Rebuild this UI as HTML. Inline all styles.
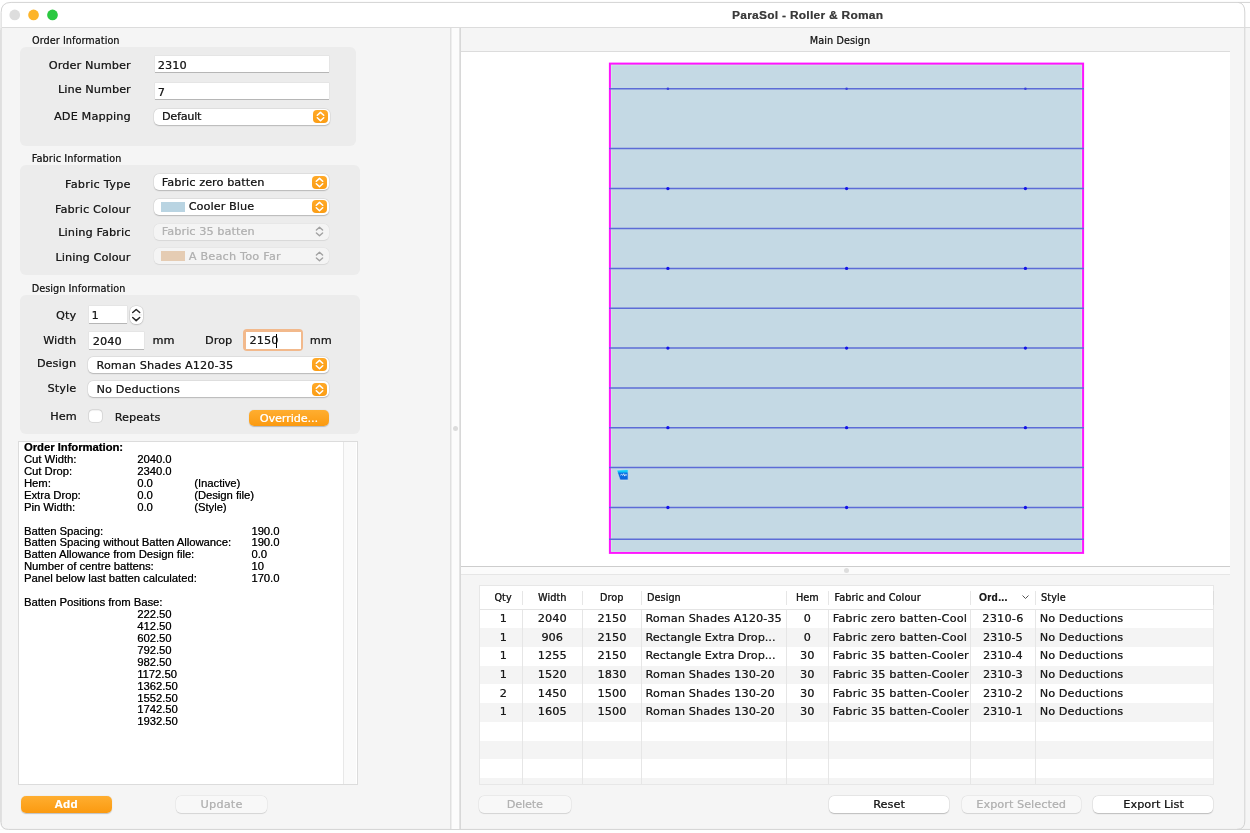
<!DOCTYPE html><html><head><meta charset="utf-8"><title>ParaSol - Roller &amp; Roman</title><style>
*{box-sizing:border-box;margin:0;padding:0}
html,body{width:1250px;height:833px;overflow:hidden;background:#fff}
body{font-family:"Liberation Sans",sans-serif;color:#1a1a1a;position:relative}
.a{position:absolute}
.t{position:absolute;white-space:nowrap;-webkit-text-stroke:0.1px currentColor;text-shadow:0.2px 0 0 color-mix(in srgb, currentColor 55%, transparent)}
.grp{position:absolute;background:#ececec;border-radius:6px}
.inp{position:absolute;background:#fff;box-shadow:0 0 0 0.5px rgba(0,0,0,.06),0 1px 0 0 rgba(0,0,0,.20)}
.pop{position:absolute;background:#fff;border-radius:5px;box-shadow:0 0 0 0.5px rgba(0,0,0,.06),0 0.5px 1.2px rgba(0,0,0,.20)}
.pop.dis{background:#f4f4f4;box-shadow:0 0 0 0.5px rgba(0,0,0,.035),0 0.5px 1px rgba(0,0,0,.07)}
.ob{position:absolute;width:15px;height:13px;border-radius:4px;background:linear-gradient(#ffa928,#fb9d14)}
.btn{position:absolute;border-radius:5px;background:#fff;box-shadow:0 0 0 0.5px rgba(0,0,0,.07),0 0.5px 1.2px rgba(0,0,0,.20)}
.btn.dis{background:#f8f8f8;box-shadow:0 0 0 0.5px rgba(0,0,0,.07),0 0.5px 1px rgba(0,0,0,.10)}
.btn.or{background:linear-gradient(#ffae30,#fb9a10);box-shadow:0 0.5px 1px rgba(0,0,0,.22)}
</style></head><body><div id="root" style="position:absolute;left:0;top:0;width:1250px;height:833px;will-change:transform">
<div class="a" style="left:0;top:28px;width:1250px;height:801.5px;background:#f5f5f5"></div>
<svg class="a" style="left:0;top:0" width="1250" height="833" viewBox="0 0 1250 833"><path d="M0 28 V822 Q0 829.4 8 829.4 H0 Z" fill="#fff"/><path d="M1.1 822.4 V12.4 Q1.1 2.4 11.1 2.4 H1250 M1238 2.4 Q1244.8 3 1244.8 12 V821 Q1244.8 829.4 1237 829.4 M1.1 822.4 Q1.1 829.4 8.5 829.4 H1250" fill="none" stroke="#d3d3d3" stroke-width="1"/><path d="M0.4 30 V822" stroke="#dcdcdc" stroke-width="0.8"/></svg>
<div class="a" style="left:2px;top:27px;width:1248px;height:1px;background:#dcdcdc"></div>
<svg class="a" style="left:0;top:0" width="70" height="28" viewBox="0 0 70 28"><circle cx="14.75" cy="14.95" r="5.35" fill="#dddddd"/><circle cx="33.55" cy="14.95" r="5.35" fill="#fdb429"/><circle cx="52.5" cy="14.95" r="5.35" fill="#2ac840"/></svg>
<div class="t" style="left:732.00px;top:7.60px;font-size:11.8px;line-height:14px;height:14px;letter-spacing:0.350px;font-weight:bold;-webkit-text-stroke:0.1px currentColor;color:#3a3a3a;">ParaSol - Roller &amp; Roman</div>
<div class="a" style="left:450px;top:28px;width:1px;height:801px;background:#e0e0e0"></div>
<div class="a" style="left:451px;top:28px;width:8px;height:801px;background:linear-gradient(90deg,#eeeeee 0,#eeeeee 1px,#fcfcfc 1px)"></div>
<div class="a" style="left:459px;top:28px;width:2px;height:801px;background:linear-gradient(90deg,#e4e4e4 0,#e4e4e4 1px,#d8d8d8 1px)"></div>
<div class="a" style="left:452.7px;top:425.6px;width:5px;height:5px;border-radius:50%;background:#dcdcdc"></div>
<div class="t" style="left:32.00px;top:35.20px;font-size:9.6px;line-height:11px;height:11px;letter-spacing:0.100px;font-family:'DejaVu Sans','Liberation Sans',sans-serif;">Order Information</div>
<div class="grp" style="left:20.3px;top:46.6px;width:335.4px;height:99.2px"></div>
<div class="t" style="left:48.80px;top:59.10px;font-size:11.2px;line-height:13px;height:13px;letter-spacing:0.147px;font-family:'DejaVu Sans','Liberation Sans',sans-serif;">Order Number</div>
<div class="t" style="left:58.00px;top:83.40px;font-size:11.2px;line-height:13px;height:13px;letter-spacing:0.091px;font-family:'DejaVu Sans','Liberation Sans',sans-serif;">Line Number</div>
<div class="t" style="left:54.00px;top:110.20px;font-size:11.2px;line-height:13px;height:13px;letter-spacing:0.181px;font-family:'DejaVu Sans','Liberation Sans',sans-serif;">ADE Mapping</div>
<div class="inp" style="left:154.5px;top:56px;width:174.9px;height:16.4px"></div>
<div class="inp" style="left:154.5px;top:82.8px;width:174.9px;height:16.6px"></div>
<div class="t" style="left:157.80px;top:58.80px;font-size:11.2px;line-height:13px;height:13px;letter-spacing:0.100px;font-family:'DejaVu Sans','Liberation Sans',sans-serif;">2310</div>
<div class="t" style="left:157.80px;top:86.00px;font-size:11.2px;line-height:13px;height:13px;letter-spacing:0.100px;font-family:'DejaVu Sans','Liberation Sans',sans-serif;">7</div>
<div class="pop" style="left:153.7px;top:109px;width:176.3px;height:15.6px"></div>
<div class="t" style="left:161.90px;top:110.10px;font-size:11.2px;line-height:13px;height:13px;letter-spacing:-0.220px;font-family:'DejaVu Sans','Liberation Sans',sans-serif;">Default</div>
<div class="ob" style="left:313.3px;top:110.3px"><svg width="15" height="13" viewBox="0 0 15 13" style="position:absolute;left:0;top:0"><path d="M4.3 5.3 L7.5 2.4 L10.7 5.3 M4.3 7.8 L7.5 10.7 L10.7 7.8" fill="none" stroke="#fff" stroke-width="1.55" stroke-linecap="round" stroke-linejoin="round"/></svg></div>
<div class="t" style="left:31.80px;top:153.20px;font-size:9.6px;line-height:11px;height:11px;letter-spacing:0.139px;font-family:'DejaVu Sans','Liberation Sans',sans-serif;">Fabric Information</div>
<div class="grp" style="left:20.3px;top:165.1px;width:340.2px;height:110.2px"></div>
<div class="t" style="left:65.00px;top:178.20px;font-size:11.2px;line-height:13px;height:13px;letter-spacing:0.295px;font-family:'DejaVu Sans','Liberation Sans',sans-serif;">Fabric Type</div>
<div class="t" style="left:54.90px;top:202.50px;font-size:11.2px;line-height:13px;height:13px;letter-spacing:0.203px;font-family:'DejaVu Sans','Liberation Sans',sans-serif;">Fabric Colour</div>
<div class="t" style="left:58.20px;top:226.30px;font-size:11.2px;line-height:13px;height:13px;letter-spacing:0.142px;font-family:'DejaVu Sans','Liberation Sans',sans-serif;">Lining Fabric</div>
<div class="t" style="left:55.40px;top:251.00px;font-size:11.2px;line-height:13px;height:13px;letter-spacing:0.119px;font-family:'DejaVu Sans','Liberation Sans',sans-serif;">Lining Colour</div>
<div class="pop" style="left:153.5px;top:174.2px;width:175.7px;height:15.9px"></div>
<div class="pop" style="left:153.5px;top:198.9px;width:175.7px;height:15.9px"></div>
<div class="pop dis" style="left:153.5px;top:223.8px;width:175.7px;height:15.9px"></div>
<div class="pop dis" style="left:153.5px;top:248.2px;width:175.7px;height:15.9px"></div>
<div class="t" style="left:161.80px;top:175.60px;font-size:11.2px;line-height:13px;height:13px;letter-spacing:0.088px;font-family:'DejaVu Sans','Liberation Sans',sans-serif;">Fabric zero batten</div>
<div class="a" style="left:161px;top:202px;width:23.5px;height:10px;background:#b9d4e2"></div>
<div class="t" style="left:188.70px;top:200.40px;font-size:11.2px;line-height:13px;height:13px;letter-spacing:0.092px;font-family:'DejaVu Sans','Liberation Sans',sans-serif;">Cooler Blue</div>
<div class="t" style="left:161.80px;top:225.00px;font-size:11.2px;line-height:13px;height:13px;letter-spacing:0.095px;font-family:'DejaVu Sans','Liberation Sans',sans-serif;color:#b2b2b2;">Fabric 35 batten</div>
<div class="a" style="left:161px;top:250.5px;width:23.5px;height:10px;background:#e5ccb3"></div>
<div class="t" style="left:188.70px;top:249.50px;font-size:11.2px;line-height:13px;height:13px;letter-spacing:0.245px;font-family:'DejaVu Sans','Liberation Sans',sans-serif;color:#b2b2b2;">A Beach Too Far</div>
<div class="ob" style="left:312.3px;top:175.6px"><svg width="15" height="13" viewBox="0 0 15 13" style="position:absolute;left:0;top:0"><path d="M4.3 5.3 L7.5 2.4 L10.7 5.3 M4.3 7.8 L7.5 10.7 L10.7 7.8" fill="none" stroke="#fff" stroke-width="1.55" stroke-linecap="round" stroke-linejoin="round"/></svg></div>
<div class="ob" style="left:312.3px;top:200.3px"><svg width="15" height="13" viewBox="0 0 15 13" style="position:absolute;left:0;top:0"><path d="M4.3 5.3 L7.5 2.4 L10.7 5.3 M4.3 7.8 L7.5 10.7 L10.7 7.8" fill="none" stroke="#fff" stroke-width="1.55" stroke-linecap="round" stroke-linejoin="round"/></svg></div>
<svg class="a" width="15" height="13" viewBox="0 0 15 13" style="left:312.3px;top:225.3px"><path d="M4.4 5.1 L7.5 2.3 L10.6 5.1 M4.4 8.0 L7.5 10.8 L10.6 8.0" fill="none" stroke="#a2a2a2" stroke-width="1.4" stroke-linecap="round" stroke-linejoin="round"/></svg>
<svg class="a" width="15" height="13" viewBox="0 0 15 13" style="left:312.3px;top:249.7px"><path d="M4.4 5.1 L7.5 2.3 L10.6 5.1 M4.4 8.0 L7.5 10.8 L10.6 8.0" fill="none" stroke="#a2a2a2" stroke-width="1.4" stroke-linecap="round" stroke-linejoin="round"/></svg>
<div class="t" style="left:31.70px;top:283.00px;font-size:9.6px;line-height:11px;height:11px;letter-spacing:0.108px;font-family:'DejaVu Sans','Liberation Sans',sans-serif;">Design Information</div>
<div class="grp" style="left:20.3px;top:294.5px;width:339.7px;height:139.2px"></div>
<div class="t" style="left:56.06px;top:309.40px;font-size:11.2px;line-height:13px;height:13px;letter-spacing:0.100px;font-family:'DejaVu Sans','Liberation Sans',sans-serif;">Qty</div>
<div class="t" style="left:43.16px;top:334.40px;font-size:11.2px;line-height:13px;height:13px;letter-spacing:0.100px;font-family:'DejaVu Sans','Liberation Sans',sans-serif;">Width</div>
<div class="t" style="left:36.90px;top:357.40px;font-size:11.2px;line-height:13px;height:13px;letter-spacing:0.106px;font-family:'DejaVu Sans','Liberation Sans',sans-serif;">Design</div>
<div class="t" style="left:47.57px;top:382.00px;font-size:11.2px;line-height:13px;height:13px;letter-spacing:0.100px;font-family:'DejaVu Sans','Liberation Sans',sans-serif;">Style</div>
<div class="t" style="left:50.18px;top:409.80px;font-size:11.2px;line-height:13px;height:13px;letter-spacing:0.100px;font-family:'DejaVu Sans','Liberation Sans',sans-serif;">Hem</div>
<div class="inp" style="left:89px;top:306.3px;width:37.8px;height:16.3px"></div>
<div class="t" style="left:91.60px;top:309.40px;font-size:11.2px;line-height:13px;height:13px;letter-spacing:0.100px;font-family:'DejaVu Sans','Liberation Sans',sans-serif;">1</div>
<div class="a" style="left:130px;top:306.2px;width:12.5px;height:17.6px;border-radius:5.5px;background:#fff;box-shadow:0 0 0 0.5px rgba(0,0,0,.08),0 0.5px 1.5px rgba(0,0,0,.26)"><svg width="12.5" height="17.6" viewBox="0 0 12.5 17.6" style="position:absolute;left:0;top:0"><path d="M0.5 8.9 H12" stroke="#e3e3e3" stroke-width="0.8"/><path d="M2.7 6.5 L6.2 3.5 L9.7 6.5 M2.7 11.5 L6.2 14.6 L9.7 11.5" fill="none" stroke="#262626" stroke-width="1.5" stroke-linecap="round" stroke-linejoin="round"/></svg></div>
<div class="inp" style="left:89px;top:332.2px;width:54.9px;height:16.4px"></div>
<div class="t" style="left:92.80px;top:334.90px;font-size:11.2px;line-height:13px;height:13px;letter-spacing:0.100px;font-family:'DejaVu Sans','Liberation Sans',sans-serif;">2040</div>
<div class="t" style="left:152.60px;top:334.40px;font-size:11.2px;line-height:13px;height:13px;letter-spacing:0.100px;font-family:'DejaVu Sans','Liberation Sans',sans-serif;">mm</div>
<div class="t" style="left:205.00px;top:334.40px;font-size:11.2px;line-height:13px;height:13px;letter-spacing:0.100px;font-family:'DejaVu Sans','Liberation Sans',sans-serif;">Drop</div>
<div class="a" style="left:243.4px;top:329.4px;width:59.8px;height:21.7px;border-radius:4px;background:#f2b98c"></div>
<div class="a" style="left:246.3px;top:332.3px;width:54.4px;height:16.3px;background:#fff"></div>
<div class="t" style="left:249.50px;top:334.40px;font-size:11.2px;line-height:13px;height:13px;letter-spacing:0.100px;font-family:'DejaVu Sans','Liberation Sans',sans-serif;">2150</div>
<div class="a" style="left:276px;top:333.5px;width:1px;height:14px;background:#000"></div>
<div class="t" style="left:309.70px;top:334.40px;font-size:11.2px;line-height:13px;height:13px;letter-spacing:0.100px;font-family:'DejaVu Sans','Liberation Sans',sans-serif;">mm</div>
<div class="pop" style="left:87.9px;top:357.1px;width:241.2px;height:15.9px"></div>
<div class="pop" style="left:87.9px;top:381.4px;width:241.2px;height:15.9px"></div>
<div class="t" style="left:96.50px;top:358.70px;font-size:11.2px;line-height:13px;height:13px;letter-spacing:0.123px;font-family:'DejaVu Sans','Liberation Sans',sans-serif;">Roman Shades A120-35</div>
<div class="t" style="left:96.50px;top:383.20px;font-size:11.2px;line-height:13px;height:13px;letter-spacing:0.128px;font-family:'DejaVu Sans','Liberation Sans',sans-serif;">No Deductions</div>
<div class="ob" style="left:312.3px;top:358.2px"><svg width="15" height="13" viewBox="0 0 15 13" style="position:absolute;left:0;top:0"><path d="M4.3 5.3 L7.5 2.4 L10.7 5.3 M4.3 7.8 L7.5 10.7 L10.7 7.8" fill="none" stroke="#fff" stroke-width="1.55" stroke-linecap="round" stroke-linejoin="round"/></svg></div>
<div class="ob" style="left:312.3px;top:382.6px"><svg width="15" height="13" viewBox="0 0 15 13" style="position:absolute;left:0;top:0"><path d="M4.3 5.3 L7.5 2.4 L10.7 5.3 M4.3 7.8 L7.5 10.7 L10.7 7.8" fill="none" stroke="#fff" stroke-width="1.55" stroke-linecap="round" stroke-linejoin="round"/></svg></div>
<div class="a" style="left:89.1px;top:410.2px;width:12.6px;height:11.8px;border-radius:3.5px;background:#fff;box-shadow:0 0 0 0.5px rgba(0,0,0,.16),inset 0 0.5px 1px rgba(0,0,0,.10)"></div>
<div class="t" style="left:114.70px;top:410.50px;font-size:11.2px;line-height:13px;height:13px;letter-spacing:0.073px;font-family:'DejaVu Sans','Liberation Sans',sans-serif;">Repeats</div>
<div class="btn or" style="left:248.9px;top:409.6px;width:80.3px;height:16.8px"></div>
<div class="t" style="left:259.75px;top:411.60px;font-size:11.2px;line-height:13px;height:13px;letter-spacing:-0.084px;font-family:'DejaVu Sans','Liberation Sans',sans-serif;color:#fff;">Override...</div>
<div class="a" style="left:18px;top:441.3px;width:339.5px;height:343.3px;background:#fff;border:1px solid #dcdcdc"></div>
<div class="a" style="left:343.3px;top:442.3px;width:13.2px;height:341.3px;background:#fafafa;border-left:1px solid #e8e8e8"></div>
<div class="t" style="left:24.00px;top:441.00px;font-size:11.23px;line-height:12px;height:12px;letter-spacing:0.000px;font-weight:bold;-webkit-text-stroke:0.1px currentColor;color:#000;">Order Information:</div>
<div class="t" style="left:24.00px;top:452.93px;font-size:11.23px;line-height:12px;height:12px;letter-spacing:0.000px;color:#000;">Cut Width:</div>
<div class="t" style="left:137.20px;top:452.93px;font-size:11.23px;line-height:12px;height:12px;letter-spacing:0.000px;color:#000;">2040.0</div>
<div class="t" style="left:24.00px;top:464.86px;font-size:11.23px;line-height:12px;height:12px;letter-spacing:0.000px;color:#000;">Cut Drop:</div>
<div class="t" style="left:137.20px;top:464.86px;font-size:11.23px;line-height:12px;height:12px;letter-spacing:0.000px;color:#000;">2340.0</div>
<div class="t" style="left:24.00px;top:476.79px;font-size:11.23px;line-height:12px;height:12px;letter-spacing:0.000px;color:#000;">Hem:</div>
<div class="t" style="left:137.20px;top:476.79px;font-size:11.23px;line-height:12px;height:12px;letter-spacing:0.000px;color:#000;">0.0</div>
<div class="t" style="left:194.20px;top:476.79px;font-size:11.23px;line-height:12px;height:12px;letter-spacing:0.000px;color:#000;">(Inactive)</div>
<div class="t" style="left:24.00px;top:488.72px;font-size:11.23px;line-height:12px;height:12px;letter-spacing:0.000px;color:#000;">Extra Drop:</div>
<div class="t" style="left:137.20px;top:488.72px;font-size:11.23px;line-height:12px;height:12px;letter-spacing:0.000px;color:#000;">0.0</div>
<div class="t" style="left:194.20px;top:488.72px;font-size:11.23px;line-height:12px;height:12px;letter-spacing:0.000px;color:#000;">(Design file)</div>
<div class="t" style="left:24.00px;top:500.65px;font-size:11.23px;line-height:12px;height:12px;letter-spacing:0.000px;color:#000;">Pin Width:</div>
<div class="t" style="left:137.20px;top:500.65px;font-size:11.23px;line-height:12px;height:12px;letter-spacing:0.000px;color:#000;">0.0</div>
<div class="t" style="left:194.20px;top:500.65px;font-size:11.23px;line-height:12px;height:12px;letter-spacing:0.000px;color:#000;">(Style)</div>
<div class="t" style="left:24.00px;top:524.51px;font-size:11.23px;line-height:12px;height:12px;letter-spacing:0.000px;color:#000;">Batten Spacing:</div>
<div class="t" style="left:251.40px;top:524.51px;font-size:11.23px;line-height:12px;height:12px;letter-spacing:0.000px;color:#000;">190.0</div>
<div class="t" style="left:24.00px;top:536.44px;font-size:11.23px;line-height:12px;height:12px;letter-spacing:0.000px;color:#000;">Batten Spacing without Batten Allowance:</div>
<div class="t" style="left:251.40px;top:536.44px;font-size:11.23px;line-height:12px;height:12px;letter-spacing:0.000px;color:#000;">190.0</div>
<div class="t" style="left:24.00px;top:548.37px;font-size:11.23px;line-height:12px;height:12px;letter-spacing:0.000px;color:#000;">Batten Allowance from Design file:</div>
<div class="t" style="left:251.40px;top:548.37px;font-size:11.23px;line-height:12px;height:12px;letter-spacing:0.000px;color:#000;">0.0</div>
<div class="t" style="left:24.00px;top:560.30px;font-size:11.23px;line-height:12px;height:12px;letter-spacing:0.000px;color:#000;">Number of centre battens:</div>
<div class="t" style="left:251.40px;top:560.30px;font-size:11.23px;line-height:12px;height:12px;letter-spacing:0.000px;color:#000;">10</div>
<div class="t" style="left:24.00px;top:572.23px;font-size:11.23px;line-height:12px;height:12px;letter-spacing:0.000px;color:#000;">Panel below last batten calculated:</div>
<div class="t" style="left:251.40px;top:572.23px;font-size:11.23px;line-height:12px;height:12px;letter-spacing:0.000px;color:#000;">170.0</div>
<div class="t" style="left:24.00px;top:596.09px;font-size:11.23px;line-height:12px;height:12px;letter-spacing:0.000px;color:#000;">Batten Positions from Base:</div>
<div class="t" style="left:137.20px;top:608.02px;font-size:11.23px;line-height:12px;height:12px;letter-spacing:0.000px;color:#000;">222.50</div>
<div class="t" style="left:137.20px;top:619.95px;font-size:11.23px;line-height:12px;height:12px;letter-spacing:0.000px;color:#000;">412.50</div>
<div class="t" style="left:137.20px;top:631.88px;font-size:11.23px;line-height:12px;height:12px;letter-spacing:0.000px;color:#000;">602.50</div>
<div class="t" style="left:137.20px;top:643.81px;font-size:11.23px;line-height:12px;height:12px;letter-spacing:0.000px;color:#000;">792.50</div>
<div class="t" style="left:137.20px;top:655.74px;font-size:11.23px;line-height:12px;height:12px;letter-spacing:0.000px;color:#000;">982.50</div>
<div class="t" style="left:137.20px;top:667.67px;font-size:11.23px;line-height:12px;height:12px;letter-spacing:0.000px;color:#000;">1172.50</div>
<div class="t" style="left:137.20px;top:679.60px;font-size:11.23px;line-height:12px;height:12px;letter-spacing:0.000px;color:#000;">1362.50</div>
<div class="t" style="left:137.20px;top:691.53px;font-size:11.23px;line-height:12px;height:12px;letter-spacing:0.000px;color:#000;">1552.50</div>
<div class="t" style="left:137.20px;top:703.46px;font-size:11.23px;line-height:12px;height:12px;letter-spacing:0.000px;color:#000;">1742.50</div>
<div class="t" style="left:137.20px;top:715.39px;font-size:11.23px;line-height:12px;height:12px;letter-spacing:0.000px;color:#000;">1932.50</div>
<div class="btn or" style="left:20.8px;top:796px;width:90.8px;height:16.8px"></div>
<div class="t" style="left:54.48px;top:798.20px;font-size:11.54px;line-height:12px;height:12px;letter-spacing:0.300px;font-weight:bold;-webkit-text-stroke:0.1px currentColor;color:#fff;">Add</div>
<div class="btn dis" style="left:176.4px;top:796px;width:90.7px;height:16.6px"></div>
<div class="t" style="left:200.60px;top:798.20px;font-size:11.2px;line-height:13px;height:13px;letter-spacing:0.248px;font-family:'DejaVu Sans','Liberation Sans',sans-serif;color:#b2b2b2;">Update</div>
<div class="t" style="left:809.80px;top:34.80px;font-size:9.6px;line-height:11px;height:11px;letter-spacing:0.128px;font-family:'DejaVu Sans','Liberation Sans',sans-serif;">Main Design</div>
<div class="a" style="left:461px;top:51px;width:769.4px;height:516px;background:#fff;border-top:1px solid #dcdcdc;border-bottom:1px solid #cdcdcd"></div>
<div class="a" style="left:461px;top:567px;width:769.4px;height:7.5px;background:#fbfbfb;border-bottom:1px solid #e6e6e6"></div>
<div class="a" style="left:843.9px;top:568.1px;width:5px;height:5px;border-radius:50%;background:#dedede"></div>
<svg class="a" style="left:600px;top:55px" width="500" height="510" viewBox="600 55 500 510"><rect x="609.9" y="63.6" width="473.2" height="489.3" fill="#c4d9e4"/><rect x="611.3" y="65" width="470.4" height="486.5" fill="none" stroke="#cdeee4" stroke-width="0.8"/><rect x="609.9" y="63.6" width="473.2" height="489.3" fill="none" stroke="#ff14ff" stroke-width="2"/><line x1="609" x2="1084" y1="88.7" y2="88.7" stroke="#5c6cd6" stroke-width="1.5"/><line x1="609" x2="1084" y1="148.6" y2="148.6" stroke="#5c6cd6" stroke-width="1.5"/><line x1="609" x2="1084" y1="188.6" y2="188.6" stroke="#5c6cd6" stroke-width="1.5"/><line x1="609" x2="1084" y1="228.5" y2="228.5" stroke="#5c6cd6" stroke-width="1.5"/><line x1="609" x2="1084" y1="268.4" y2="268.4" stroke="#5c6cd6" stroke-width="1.5"/><line x1="609" x2="1084" y1="308.3" y2="308.3" stroke="#5c6cd6" stroke-width="1.5"/><line x1="609" x2="1084" y1="348.1" y2="348.1" stroke="#5c6cd6" stroke-width="1.5"/><line x1="609" x2="1084" y1="387.9" y2="387.9" stroke="#5c6cd6" stroke-width="1.5"/><line x1="609" x2="1084" y1="427.7" y2="427.7" stroke="#5c6cd6" stroke-width="1.5"/><line x1="609" x2="1084" y1="467.5" y2="467.5" stroke="#5c6cd6" stroke-width="1.5"/><line x1="609" x2="1084" y1="507.5" y2="507.5" stroke="#5c6cd6" stroke-width="1.5"/><line x1="609" x2="1084" y1="539.2" y2="539.2" stroke="#5c6cd6" stroke-width="1.5"/><circle cx="667.9" cy="88.7" r="1.3" fill="#3840dc"/><circle cx="846.6" cy="88.7" r="1.3" fill="#3840dc"/><circle cx="1025.4" cy="88.7" r="1.3" fill="#3840dc"/><circle cx="667.9" cy="188.6" r="1.65" fill="#1212ea"/><circle cx="846.6" cy="188.6" r="1.65" fill="#1212ea"/><circle cx="1025.4" cy="188.6" r="1.65" fill="#1212ea"/><circle cx="667.9" cy="268.4" r="1.65" fill="#1212ea"/><circle cx="846.6" cy="268.4" r="1.65" fill="#1212ea"/><circle cx="1025.4" cy="268.4" r="1.65" fill="#1212ea"/><circle cx="667.9" cy="348.1" r="1.65" fill="#1212ea"/><circle cx="846.6" cy="348.1" r="1.65" fill="#1212ea"/><circle cx="1025.4" cy="348.1" r="1.65" fill="#1212ea"/><circle cx="667.9" cy="427.7" r="1.65" fill="#1212ea"/><circle cx="846.6" cy="427.7" r="1.65" fill="#1212ea"/><circle cx="1025.4" cy="427.7" r="1.65" fill="#1212ea"/><circle cx="667.9" cy="507.5" r="1.65" fill="#1212ea"/><circle cx="846.6" cy="507.5" r="1.65" fill="#1212ea"/><circle cx="1025.4" cy="507.5" r="1.65" fill="#1212ea"/><defs><linearGradient id="ig" x1="0" y1="0" x2="0" y2="1"><stop offset="0" stop-color="#12d4fa"/><stop offset="0.22" stop-color="#10c4f8"/><stop offset="0.36" stop-color="#0a70e2"/><stop offset="1" stop-color="#0a62dc"/></linearGradient></defs><path d="M616.7 470.2 L628.1 469.5 L628.1 479.9 L620.1 479.9 Z" fill="url(#ig)" stroke="#d6e6ee" stroke-width="0.6"/><path d="M620.3 475.2 l1.2 -0.8 l1.2 0.9 l1 -1.6 l1 2.4 l1 -1.6 l1.2 0.7" fill="none" stroke="#fff" stroke-width="0.8"/></svg>
<div class="a" style="left:479px;top:585.3px;width:735px;height:199.3px;background:#fff;border:1px solid #e7e7e7"></div>
<div class="a" style="left:480px;top:628.30px;width:733px;height:18.70px;background:#f4f4f4"></div>
<div class="a" style="left:480px;top:665.70px;width:733px;height:18.70px;background:#f4f4f4"></div>
<div class="a" style="left:480px;top:703.10px;width:733px;height:18.70px;background:#f4f4f4"></div>
<div class="a" style="left:480px;top:740.50px;width:733px;height:18.70px;background:#f4f4f4"></div>
<div class="a" style="left:480px;top:777.90px;width:733px;height:6.10px;background:#f4f4f4"></div>
<div class="a" style="left:480px;top:609px;width:733px;height:1px;background:#e4e4e4"></div>
<div class="a" style="left:522.0px;top:610px;width:1px;height:174px;background:#e6e6e6"></div>
<div class="a" style="left:522.0px;top:590.5px;width:1px;height:14px;background:#e6e6e6"></div>
<div class="a" style="left:581.7px;top:610px;width:1px;height:174px;background:#e6e6e6"></div>
<div class="a" style="left:581.7px;top:590.5px;width:1px;height:14px;background:#e6e6e6"></div>
<div class="a" style="left:641.1px;top:610px;width:1px;height:174px;background:#e6e6e6"></div>
<div class="a" style="left:641.1px;top:590.5px;width:1px;height:14px;background:#e6e6e6"></div>
<div class="a" style="left:785.7px;top:610px;width:1px;height:174px;background:#e6e6e6"></div>
<div class="a" style="left:785.7px;top:590.5px;width:1px;height:14px;background:#e6e6e6"></div>
<div class="a" style="left:828.0px;top:610px;width:1px;height:174px;background:#e6e6e6"></div>
<div class="a" style="left:828.0px;top:590.5px;width:1px;height:14px;background:#e6e6e6"></div>
<div class="a" style="left:969.9px;top:610px;width:1px;height:174px;background:#e6e6e6"></div>
<div class="a" style="left:969.9px;top:590.5px;width:1px;height:14px;background:#e6e6e6"></div>
<div class="a" style="left:1034.7px;top:610px;width:1px;height:174px;background:#e6e6e6"></div>
<div class="a" style="left:1034.7px;top:590.5px;width:1px;height:14px;background:#e6e6e6"></div>
<div class="a" style="left:1212.6px;top:590.5px;width:1px;height:14px;background:#dcdcdc"></div>
<div class="t" style="left:494.40px;top:591.50px;font-size:9.6px;line-height:11px;height:11px;letter-spacing:0.100px;font-family:'DejaVu Sans','Liberation Sans',sans-serif;-webkit-text-stroke:0.2px currentColor;">Qty</div>
<div class="t" style="left:538.05px;top:591.50px;font-size:9.6px;line-height:11px;height:11px;letter-spacing:0.100px;font-family:'DejaVu Sans','Liberation Sans',sans-serif;-webkit-text-stroke:0.2px currentColor;">Width</div>
<div class="t" style="left:599.90px;top:591.50px;font-size:9.6px;line-height:11px;height:11px;letter-spacing:0.100px;font-family:'DejaVu Sans','Liberation Sans',sans-serif;-webkit-text-stroke:0.2px currentColor;">Drop</div>
<div class="t" style="left:647.10px;top:591.50px;font-size:9.6px;line-height:11px;height:11px;letter-spacing:0.091px;font-family:'DejaVu Sans','Liberation Sans',sans-serif;-webkit-text-stroke:0.2px currentColor;">Design</div>
<div class="t" style="left:796.06px;top:591.50px;font-size:9.6px;line-height:11px;height:11px;letter-spacing:0.100px;font-family:'DejaVu Sans','Liberation Sans',sans-serif;-webkit-text-stroke:0.2px currentColor;">Hem</div>
<div class="t" style="left:834.40px;top:591.50px;font-size:9.6px;line-height:11px;height:11px;letter-spacing:0.155px;font-family:'DejaVu Sans','Liberation Sans',sans-serif;-webkit-text-stroke:0.2px currentColor;">Fabric and Colour</div>
<div class="t" style="left:979.00px;top:591.50px;font-size:10.1px;line-height:11px;height:11px;letter-spacing:0.400px;font-weight:bold;-webkit-text-stroke:0.1px currentColor;">Ord...</div>
<svg class="a" style="left:1020.6px;top:593.3px" width="9" height="8" viewBox="0 0 9 8"><path d="M1.5 2.5 L4.5 5.5 L7.5 2.5" fill="none" stroke="#555" stroke-width="1"/></svg>
<div class="t" style="left:1041.10px;top:591.50px;font-size:9.6px;line-height:11px;height:11px;letter-spacing:0.100px;font-family:'DejaVu Sans','Liberation Sans',sans-serif;-webkit-text-stroke:0.2px currentColor;">Style</div>
<div class="t" style="left:499.64px;top:611.80px;font-size:11.2px;line-height:13px;height:13px;letter-spacing:0.100px;font-family:'DejaVu Sans','Liberation Sans',sans-serif;">1</div>
<div class="t" style="left:537.80px;top:611.80px;font-size:11.2px;line-height:13px;height:13px;letter-spacing:0.100px;font-family:'DejaVu Sans','Liberation Sans',sans-serif;">2040</div>
<div class="t" style="left:597.60px;top:611.80px;font-size:11.2px;line-height:13px;height:13px;letter-spacing:0.100px;font-family:'DejaVu Sans','Liberation Sans',sans-serif;">2150</div>
<div class="t" style="left:645.50px;top:611.80px;font-size:11.2px;line-height:13px;height:13px;letter-spacing:0.102px;font-family:'DejaVu Sans','Liberation Sans',sans-serif;">Roman Shades A120-35</div>
<div class="t" style="left:803.64px;top:611.80px;font-size:11.2px;line-height:13px;height:13px;letter-spacing:0.100px;font-family:'DejaVu Sans','Liberation Sans',sans-serif;">0</div>
<div class="t" style="left:832.70px;top:611.80px;font-size:11.2px;line-height:13px;height:13px;letter-spacing:0.205px;font-family:'DejaVu Sans','Liberation Sans',sans-serif;width:137px;overflow:hidden;">Fabric zero batten-Cool</div>
<div class="t" style="left:982.30px;top:611.80px;font-size:11.2px;line-height:13px;height:13px;letter-spacing:0.266px;font-family:'DejaVu Sans','Liberation Sans',sans-serif;">2310-6</div>
<div class="t" style="left:1039.70px;top:611.80px;font-size:11.2px;line-height:13px;height:13px;letter-spacing:0.137px;font-family:'DejaVu Sans','Liberation Sans',sans-serif;">No Deductions</div>
<div class="t" style="left:499.64px;top:630.50px;font-size:11.2px;line-height:13px;height:13px;letter-spacing:0.100px;font-family:'DejaVu Sans','Liberation Sans',sans-serif;">1</div>
<div class="t" style="left:541.41px;top:630.50px;font-size:11.2px;line-height:13px;height:13px;letter-spacing:0.100px;font-family:'DejaVu Sans','Liberation Sans',sans-serif;">906</div>
<div class="t" style="left:597.60px;top:630.50px;font-size:11.2px;line-height:13px;height:13px;letter-spacing:0.100px;font-family:'DejaVu Sans','Liberation Sans',sans-serif;">2150</div>
<div class="t" style="left:645.50px;top:630.50px;font-size:11.2px;line-height:13px;height:13px;letter-spacing:-0.000px;font-family:'DejaVu Sans','Liberation Sans',sans-serif;">Rectangle Extra Drop...</div>
<div class="t" style="left:803.64px;top:630.50px;font-size:11.2px;line-height:13px;height:13px;letter-spacing:0.100px;font-family:'DejaVu Sans','Liberation Sans',sans-serif;">0</div>
<div class="t" style="left:832.70px;top:630.50px;font-size:11.2px;line-height:13px;height:13px;letter-spacing:0.205px;font-family:'DejaVu Sans','Liberation Sans',sans-serif;width:137px;overflow:hidden;">Fabric zero batten-Cool</div>
<div class="t" style="left:982.96px;top:630.50px;font-size:11.2px;line-height:13px;height:13px;letter-spacing:0.000px;font-family:'DejaVu Sans','Liberation Sans',sans-serif;">2310-5</div>
<div class="t" style="left:1039.70px;top:630.50px;font-size:11.2px;line-height:13px;height:13px;letter-spacing:0.137px;font-family:'DejaVu Sans','Liberation Sans',sans-serif;">No Deductions</div>
<div class="t" style="left:499.64px;top:649.20px;font-size:11.2px;line-height:13px;height:13px;letter-spacing:0.100px;font-family:'DejaVu Sans','Liberation Sans',sans-serif;">1</div>
<div class="t" style="left:537.80px;top:649.20px;font-size:11.2px;line-height:13px;height:13px;letter-spacing:0.100px;font-family:'DejaVu Sans','Liberation Sans',sans-serif;">1255</div>
<div class="t" style="left:597.60px;top:649.20px;font-size:11.2px;line-height:13px;height:13px;letter-spacing:0.100px;font-family:'DejaVu Sans','Liberation Sans',sans-serif;">2150</div>
<div class="t" style="left:645.50px;top:649.20px;font-size:11.2px;line-height:13px;height:13px;letter-spacing:-0.000px;font-family:'DejaVu Sans','Liberation Sans',sans-serif;">Rectangle Extra Drop...</div>
<div class="t" style="left:800.02px;top:649.20px;font-size:11.2px;line-height:13px;height:13px;letter-spacing:0.100px;font-family:'DejaVu Sans','Liberation Sans',sans-serif;">30</div>
<div class="t" style="left:832.70px;top:649.20px;font-size:11.2px;line-height:13px;height:13px;letter-spacing:0.207px;font-family:'DejaVu Sans','Liberation Sans',sans-serif;width:137px;overflow:hidden;">Fabric 35 batten-Cooler</div>
<div class="t" style="left:982.96px;top:649.20px;font-size:11.2px;line-height:13px;height:13px;letter-spacing:0.000px;font-family:'DejaVu Sans','Liberation Sans',sans-serif;">2310-4</div>
<div class="t" style="left:1039.70px;top:649.20px;font-size:11.2px;line-height:13px;height:13px;letter-spacing:0.137px;font-family:'DejaVu Sans','Liberation Sans',sans-serif;">No Deductions</div>
<div class="t" style="left:499.64px;top:667.90px;font-size:11.2px;line-height:13px;height:13px;letter-spacing:0.100px;font-family:'DejaVu Sans','Liberation Sans',sans-serif;">1</div>
<div class="t" style="left:537.80px;top:667.90px;font-size:11.2px;line-height:13px;height:13px;letter-spacing:0.100px;font-family:'DejaVu Sans','Liberation Sans',sans-serif;">1520</div>
<div class="t" style="left:597.60px;top:667.90px;font-size:11.2px;line-height:13px;height:13px;letter-spacing:0.100px;font-family:'DejaVu Sans','Liberation Sans',sans-serif;">1830</div>
<div class="t" style="left:645.50px;top:667.90px;font-size:11.2px;line-height:13px;height:13px;letter-spacing:0.139px;font-family:'DejaVu Sans','Liberation Sans',sans-serif;">Roman Shades 130-20</div>
<div class="t" style="left:800.02px;top:667.90px;font-size:11.2px;line-height:13px;height:13px;letter-spacing:0.100px;font-family:'DejaVu Sans','Liberation Sans',sans-serif;">30</div>
<div class="t" style="left:832.70px;top:667.90px;font-size:11.2px;line-height:13px;height:13px;letter-spacing:0.207px;font-family:'DejaVu Sans','Liberation Sans',sans-serif;width:137px;overflow:hidden;">Fabric 35 batten-Cooler</div>
<div class="t" style="left:982.96px;top:667.90px;font-size:11.2px;line-height:13px;height:13px;letter-spacing:0.000px;font-family:'DejaVu Sans','Liberation Sans',sans-serif;">2310-3</div>
<div class="t" style="left:1039.70px;top:667.90px;font-size:11.2px;line-height:13px;height:13px;letter-spacing:0.137px;font-family:'DejaVu Sans','Liberation Sans',sans-serif;">No Deductions</div>
<div class="t" style="left:499.64px;top:686.60px;font-size:11.2px;line-height:13px;height:13px;letter-spacing:0.100px;font-family:'DejaVu Sans','Liberation Sans',sans-serif;">2</div>
<div class="t" style="left:537.80px;top:686.60px;font-size:11.2px;line-height:13px;height:13px;letter-spacing:0.100px;font-family:'DejaVu Sans','Liberation Sans',sans-serif;">1450</div>
<div class="t" style="left:597.60px;top:686.60px;font-size:11.2px;line-height:13px;height:13px;letter-spacing:0.100px;font-family:'DejaVu Sans','Liberation Sans',sans-serif;">1500</div>
<div class="t" style="left:645.50px;top:686.60px;font-size:11.2px;line-height:13px;height:13px;letter-spacing:0.139px;font-family:'DejaVu Sans','Liberation Sans',sans-serif;">Roman Shades 130-20</div>
<div class="t" style="left:800.02px;top:686.60px;font-size:11.2px;line-height:13px;height:13px;letter-spacing:0.100px;font-family:'DejaVu Sans','Liberation Sans',sans-serif;">30</div>
<div class="t" style="left:832.70px;top:686.60px;font-size:11.2px;line-height:13px;height:13px;letter-spacing:0.207px;font-family:'DejaVu Sans','Liberation Sans',sans-serif;width:137px;overflow:hidden;">Fabric 35 batten-Cooler</div>
<div class="t" style="left:982.96px;top:686.60px;font-size:11.2px;line-height:13px;height:13px;letter-spacing:0.000px;font-family:'DejaVu Sans','Liberation Sans',sans-serif;">2310-2</div>
<div class="t" style="left:1039.70px;top:686.60px;font-size:11.2px;line-height:13px;height:13px;letter-spacing:0.137px;font-family:'DejaVu Sans','Liberation Sans',sans-serif;">No Deductions</div>
<div class="t" style="left:499.64px;top:705.30px;font-size:11.2px;line-height:13px;height:13px;letter-spacing:0.100px;font-family:'DejaVu Sans','Liberation Sans',sans-serif;">1</div>
<div class="t" style="left:537.80px;top:705.30px;font-size:11.2px;line-height:13px;height:13px;letter-spacing:0.100px;font-family:'DejaVu Sans','Liberation Sans',sans-serif;">1605</div>
<div class="t" style="left:597.60px;top:705.30px;font-size:11.2px;line-height:13px;height:13px;letter-spacing:0.100px;font-family:'DejaVu Sans','Liberation Sans',sans-serif;">1500</div>
<div class="t" style="left:645.50px;top:705.30px;font-size:11.2px;line-height:13px;height:13px;letter-spacing:0.139px;font-family:'DejaVu Sans','Liberation Sans',sans-serif;">Roman Shades 130-20</div>
<div class="t" style="left:800.02px;top:705.30px;font-size:11.2px;line-height:13px;height:13px;letter-spacing:0.100px;font-family:'DejaVu Sans','Liberation Sans',sans-serif;">30</div>
<div class="t" style="left:832.70px;top:705.30px;font-size:11.2px;line-height:13px;height:13px;letter-spacing:0.207px;font-family:'DejaVu Sans','Liberation Sans',sans-serif;width:137px;overflow:hidden;">Fabric 35 batten-Cooler</div>
<div class="t" style="left:982.96px;top:705.30px;font-size:11.2px;line-height:13px;height:13px;letter-spacing:0.000px;font-family:'DejaVu Sans','Liberation Sans',sans-serif;">2310-1</div>
<div class="t" style="left:1039.70px;top:705.30px;font-size:11.2px;line-height:13px;height:13px;letter-spacing:0.137px;font-family:'DejaVu Sans','Liberation Sans',sans-serif;">No Deductions</div>
<div class="btn dis" style="left:478.8px;top:795.8px;width:92px;height:17.2px"></div>
<div class="t" style="left:506.80px;top:798.00px;font-size:11.2px;line-height:13px;height:13px;letter-spacing:-0.120px;font-family:'DejaVu Sans','Liberation Sans',sans-serif;color:#b2b2b2;">Delete</div>
<div class="btn" style="left:829.3px;top:795.8px;width:119.6px;height:17.2px"></div>
<div class="t" style="left:873.26px;top:798.00px;font-size:11.2px;line-height:13px;height:13px;letter-spacing:0.100px;font-family:'DejaVu Sans','Liberation Sans',sans-serif;">Reset</div>
<div class="btn dis" style="left:962px;top:795.8px;width:119.3px;height:17.2px"></div>
<div class="t" style="left:976.35px;top:798.00px;font-size:11.2px;line-height:13px;height:13px;letter-spacing:0.066px;font-family:'DejaVu Sans','Liberation Sans',sans-serif;color:#b2b2b2;">Export Selected</div>
<div class="btn" style="left:1093.3px;top:795.8px;width:120px;height:17.2px"></div>
<div class="t" style="left:1123.35px;top:798.00px;font-size:11.2px;line-height:13px;height:13px;letter-spacing:0.070px;font-family:'DejaVu Sans','Liberation Sans',sans-serif;">Export List</div>
</div></body></html>
